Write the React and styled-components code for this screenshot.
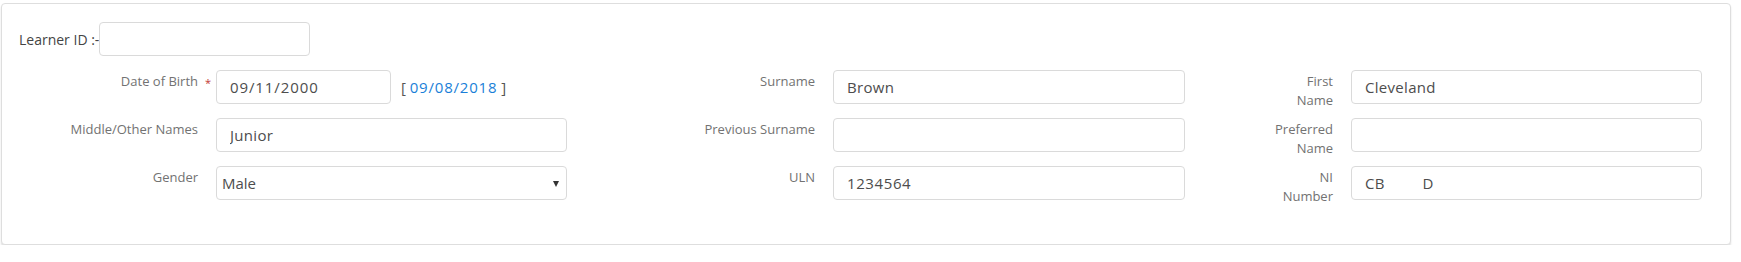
import React from "react";
import styled, { createGlobalStyle } from "styled-components";

const GlobalStyle = createGlobalStyle`
  body {
    margin: 0;
    background: #fff;
    font-family: "Open Sans", "Noto Sans", Arial, sans-serif;
  }
`;

const Page = styled.div`
  padding: 3px 0 0 1px;
`;

const Card = styled.div`
  box-sizing: border-box;
  width: 1730px;
  background: #fff;
  border: 1px solid #dedede;
  border-radius: 4px;
  box-shadow: 0 2px 2px rgba(0, 0, 0, 0.12);
  padding: 18px 27px 44px 17px;
`;

const LearnerRow = styled.div`
  display: flex;
  align-items: center;
  margin-bottom: 14px;
`;

const LearnerLabel = styled.span`
  font-size: 14px;
  color: #444;
`;

const FieldGrid = styled.div`
  display: grid;
  grid-template-columns: 179px 351px 230px 352px 130px 351px;
  grid-auto-rows: 34px;
  column-gap: 18px;
  row-gap: 14px;
`;

const Label = styled.label`
  position: relative;
  justify-self: end;
  align-self: start;
  width: ${(p) => (p.$stack ? "min-content" : "auto")};
  padding-top: 2px;
  font-size: 13px;
  line-height: 19px;
  color: #727272;
  text-align: right;
`;

const Required = styled.span`
  position: absolute;
  right: -13px;
  top: 3px;
  color: #c23934;
  font-size: 11px;
`;

const Input = styled.input`
  box-sizing: border-box;
  width: ${(p) => p.$width || "100%"};
  height: 34px;
  margin: 0;
  padding: 0 13px;
  border: 1px solid #dadada;
  border-radius: 4px;
  background: #fff;
  font-family: inherit;
  font-size: 15px;
  letter-spacing: ${(p) => p.$spacing || "0.3px"};
  color: #4d4d4d;
  outline: none;
`;

const DateCell = styled.div`
  display: flex;
  align-items: center;
`;

const LastDate = styled.span`
  margin-left: 10px;
  font-size: 15px;
  letter-spacing: 0.8px;
  color: #555;
`;

const DateLink = styled.a`
  color: #1a7fd8;
  text-decoration: none;
  margin: 0 4px 0 3px;
`;

const SelectWrap = styled.div`
  position: relative;

  &::after {
    content: "";
    position: absolute;
    right: 8px;
    top: 15px;
    border-left: 3px solid transparent;
    border-right: 3px solid transparent;
    border-top: 6px solid #333;
    pointer-events: none;
  }
`;

const Select = styled.select`
  box-sizing: border-box;
  width: 100%;
  height: 34px;
  margin: 0;
  padding: 0 5px;
  border: 1px solid #dadada;
  border-radius: 4px;
  background: #fff;
  appearance: none;
  font-family: inherit;
  font-size: 15px;
  color: #4d4d4d;
  outline: none;
`;

const Field = ({ label, stack, children }) => (
  <>
    <Label $stack={stack}>{label}</Label>
    {children}
  </>
);

export default function App() {
  return (
    <Page>
      <GlobalStyle />
      <Card>
        <LearnerRow>
          <LearnerLabel>Learner ID :-</LearnerLabel>
          <Input $width="211px" defaultValue="" />
        </LearnerRow>
        <FieldGrid>
          <Label>
            Date of Birth
            <Required>*</Required>
          </Label>
          <DateCell>
            <Input $width="175px" $spacing="0.9px" defaultValue="09/11/2000" />
            <LastDate>
              [<DateLink href="#">09/08/2018</DateLink>]
            </LastDate>
          </DateCell>
          <Field label="Surname">
            <Input defaultValue="Brown" />
          </Field>
          <Field label="First Name" stack>
            <Input defaultValue="Cleveland" />
          </Field>

          <Field label="Middle/Other Names">
            <Input defaultValue="Junior" />
          </Field>
          <Field label="Previous Surname">
            <Input defaultValue="" />
          </Field>
          <Field label="Preferred Name" stack>
            <Input defaultValue="" />
          </Field>

          <Field label="Gender">
            <SelectWrap>
              <Select defaultValue="Male">
                <option>Male</option>
                <option>Female</option>
              </Select>
            </SelectWrap>
          </Field>
          <Field label="ULN">
            <Input $spacing="0.6px" defaultValue="1234564" />
          </Field>
          <Field label="NI Number" stack>
            <Input defaultValue={"CB         D"} />
          </Field>
        </FieldGrid>
      </Card>
    </Page>
  );
}
